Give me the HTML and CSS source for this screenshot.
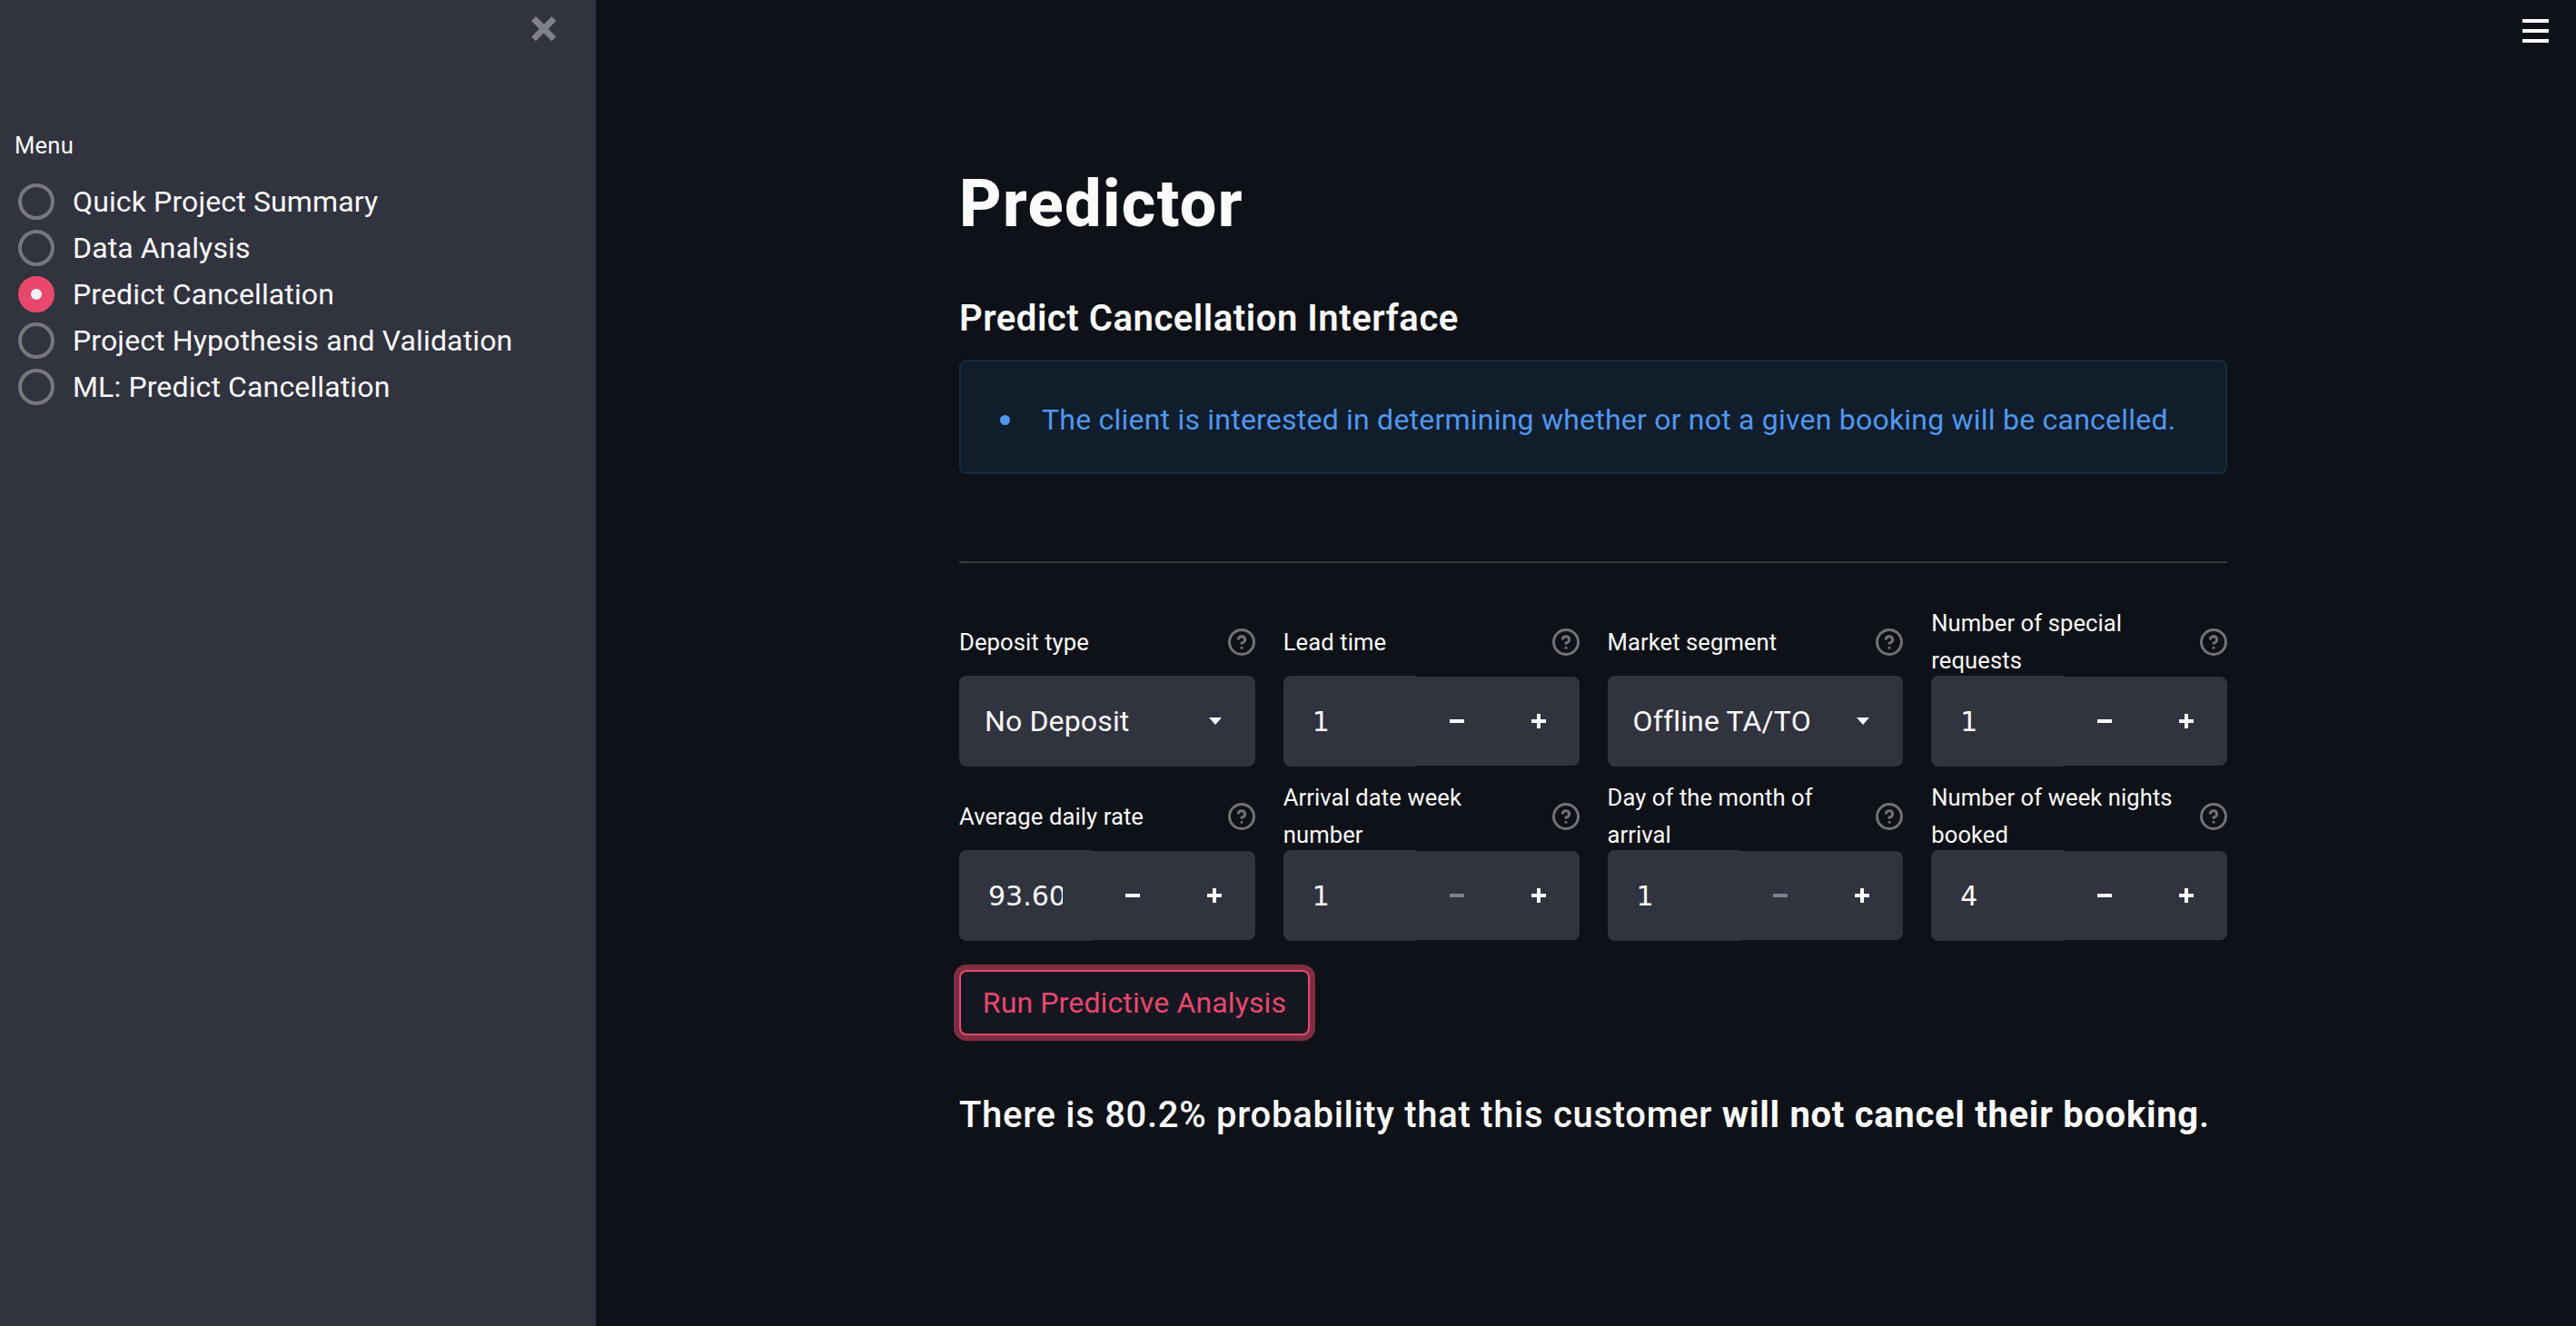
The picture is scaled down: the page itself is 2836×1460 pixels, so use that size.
FILE: index.html
```html
<!DOCTYPE html>
<html lang="en">
<head>
<meta charset="utf-8">
<title>Predictor</title>
<link rel="stylesheet" href="styles.css">
</head>
<body>
<aside class="sidebar">
  <svg class="close" viewBox="0 0 8 8"><path d="M1.41 0L0 1.41l.72.72L2.5 3.94.72 5.72 0 6.41 1.41 7.82l.72-.72 1.78-1.78 1.78 1.78.69.72 1.41-1.41-.72-.72-1.78-1.78 1.78-1.78.72-.69L6.41 0l-.69.72L3.94 2.5 2.16.72 1.41 0z"/></svg>
  <div class="menu-label">Menu</div>
  <ul class="radio-list">
    <li class="radio"><span class="dot"></span>Quick Project Summary</li>
    <li class="radio"><span class="dot"></span>Data Analysis</li>
    <li class="radio selected"><span class="dot"></span>Predict Cancellation</li>
    <li class="radio"><span class="dot"></span>Project Hypothesis and Validation</li>
    <li class="radio"><span class="dot"></span>ML: Predict Cancellation</li>
  </ul>
</aside>
<main class="main">
  <div class="hamburger"><span></span><span></span><span></span></div>
  <h1 class="title">Predictor</h1>
  <h3 class="subtitle">Predict Cancellation Interface</h3>
  <div class="info"><span class="bullet"></span><span class="info-text">The client is interested in determining whether or not a given booking will be cancelled.</span></div>
  <hr class="rule">
  <section class="form-grid">
    <div class="field">
      <div class="label"><span>Deposit type</span><svg class="help" viewBox="0 0 24 24"><circle cx="12" cy="12" r="10.8"/><path d="M9.09 9a3 3 0 0 1 5.83 1c0 2-3 3-3 3"/><path d="M12 17h.01"/></svg></div>
      <div class="select"><span>No Deposit</span><svg class="caret" viewBox="0 0 14 8"><path d="M0 0h14L7 8z"/></svg></div>
    </div>
    <div class="field">
      <div class="label"><span>Lead time</span><svg class="help" viewBox="0 0 24 24"><circle cx="12" cy="12" r="10.8"/><path d="M9.09 9a3 3 0 0 1 5.83 1c0 2-3 3-3 3"/><path d="M12 17h.01"/></svg></div>
      <div class="number"><div class="value"><span class="digits">1</span></div><div class="steps"><span class="step minus"></span><span class="step plus"></span></div></div>
    </div>
    <div class="field">
      <div class="label"><span>Market segment</span><svg class="help" viewBox="0 0 24 24"><circle cx="12" cy="12" r="10.8"/><path d="M9.09 9a3 3 0 0 1 5.83 1c0 2-3 3-3 3"/><path d="M12 17h.01"/></svg></div>
      <div class="select"><span>Offline TA/TO</span><svg class="caret" viewBox="0 0 14 8"><path d="M0 0h14L7 8z"/></svg></div>
    </div>
    <div class="field">
      <div class="label"><span>Number of special<br>requests</span><svg class="help" viewBox="0 0 24 24"><circle cx="12" cy="12" r="10.8"/><path d="M9.09 9a3 3 0 0 1 5.83 1c0 2-3 3-3 3"/><path d="M12 17h.01"/></svg></div>
      <div class="number"><div class="value"><span class="digits">1</span></div><div class="steps"><span class="step minus"></span><span class="step plus"></span></div></div>
    </div>
    <div class="field">
      <div class="label"><span>Average daily rate</span><svg class="help" viewBox="0 0 24 24"><circle cx="12" cy="12" r="10.8"/><path d="M9.09 9a3 3 0 0 1 5.83 1c0 2-3 3-3 3"/><path d="M12 17h.01"/></svg></div>
      <div class="number"><div class="value"><span class="digits">93.60</span></div><div class="steps"><span class="step minus"></span><span class="step plus"></span></div></div>
    </div>
    <div class="field">
      <div class="label"><span>Arrival date week<br>number</span><svg class="help" viewBox="0 0 24 24"><circle cx="12" cy="12" r="10.8"/><path d="M9.09 9a3 3 0 0 1 5.83 1c0 2-3 3-3 3"/><path d="M12 17h.01"/></svg></div>
      <div class="number"><div class="value"><span class="digits">1</span></div><div class="steps"><span class="step minus disabled"></span><span class="step plus"></span></div></div>
    </div>
    <div class="field">
      <div class="label"><span>Day of the month of<br>arrival</span><svg class="help" viewBox="0 0 24 24"><circle cx="12" cy="12" r="10.8"/><path d="M9.09 9a3 3 0 0 1 5.83 1c0 2-3 3-3 3"/><path d="M12 17h.01"/></svg></div>
      <div class="number"><div class="value"><span class="digits">1</span></div><div class="steps"><span class="step minus disabled"></span><span class="step plus"></span></div></div>
    </div>
    <div class="field">
      <div class="label"><span>Number of week nights<br>booked</span><svg class="help" viewBox="0 0 24 24"><circle cx="12" cy="12" r="10.8"/><path d="M9.09 9a3 3 0 0 1 5.83 1c0 2-3 3-3 3"/><path d="M12 17h.01"/></svg></div>
      <div class="number"><div class="value"><span class="digits">4</span></div><div class="steps"><span class="step minus"></span><span class="step plus"></span></div></div>
    </div>
  </section>
  <button class="run">Run Predictive Analysis</button>
  <p class="result">There is 80.2% probability that this customer <strong>will not cancel their booking</strong>.</p>
</main>
</body>
</html>
```
FILE: styles.css
```css
* { box-sizing: border-box; }
html, body { margin: 0; height: 100%; }
body {
  display: flex;
  height: 1460px;
  overflow: hidden;
  background: #0e1117;
  color: #fafafa;
  font-family: Roboto, "Noto Sans", sans-serif;
}
.sidebar {
  position: relative;
  width: 656px;
  flex: none;
  background: #31333f;
  padding: 138px 16px 0;
}
.close {
  position: absolute;
  left: 585px;
  top: 18px;
  width: 28px;
  height: 28px;
  fill: #808188;
}
.menu-label {
  font-size: 25.6px;
  line-height: 44px;
  letter-spacing: 0.2px;
}
.radio-list {
  list-style: none;
  margin: 14px 0 0;
  padding: 0;
}
.radio {
  display: flex;
  align-items: center;
  height: 51.2px;
  font-size: 32px;
  letter-spacing: 0.13px;
}
.dot {
  width: 40px;
  height: 40px;
  margin: 0 20px 0 4px;
  border: 4px solid #77787f;
  border-radius: 50%;
  flex: none;
}
.selected .dot {
  border: 14px solid #e8486b;
  background: #f0f0f5;
}
.main {
  position: relative;
  flex: 1;
  padding: 175px 384px 0 400px;
}
.hamburger {
  position: absolute;
  right: 30px;
  top: 21px;
  width: 29px;
  display: flex;
  flex-direction: column;
  gap: 7px;
}
.hamburger span {
  height: 4px;
  background: #fafafa;
}
.title {
  margin: 0 0 44px;
  font-size: 72px;
  line-height: 100px;
  font-weight: 800;
  letter-spacing: 1.4px;
}
.subtitle {
  margin: 0 0 13px;
  font-size: 40px;
  line-height: 64px;
  font-weight: 600;
  letter-spacing: 0.55px;
}
.info {
  display: flex;
  align-items: center;
  height: 126px;
  padding: 6px 32px 0 43px;
  background: #111d2b;
  border: 2px solid #162a3f;
  border-radius: 8px;
  color: #4f97f0;
  font-size: 32px;
  letter-spacing: 0.22px;
}
.bullet {
  width: 11px;
  height: 11px;
  border-radius: 50%;
  background: #4f97f0;
  margin-right: 35px;
  flex: none;
}
.rule {
  margin: 96px 0 0;
  height: 2px;
  border: 0;
  background: #3a3b42;
}
.form-grid {
  display: grid;
  grid-template-columns: repeat(4, 1fr);
  column-gap: 31px;
  row-gap: 14px;
  margin-top: 46px;
}
.label {
  display: flex;
  align-items: center;
  justify-content: space-between;
  height: 78px;
  padding-top: 4px;
  font-size: 25.6px;
  line-height: 41px;
  letter-spacing: 0.08px;
}
.help {
  width: 30px;
  height: 30px;
  flex: none;
  fill: none;
  stroke: #717276;
  stroke-width: 2.4;
  stroke-linecap: round;
  stroke-linejoin: round;
}
.select {
  display: flex;
  align-items: center;
  justify-content: space-between;
  height: 100px;
  padding: 0 37px 0 28px;
  background: #31333f;
  border-radius: 8px;
  font-size: 32px;
  letter-spacing: 0.15px;
}
.caret {
  width: 14px;
  height: 8px;
  fill: #fafafa;
}
.number {
  display: flex;
  align-items: center;
  height: 100px;
}
.value {
  width: 146px;
  height: 100px;
  flex: none;
  display: flex;
  align-items: center;
  padding-left: 32px;
  background: #31333f;
  border-radius: 8px 0 0 8px;
  font-family: "DejaVu Sans", sans-serif;
  font-size: 30px;
  white-space: nowrap;
}
.digits {
  display: block;
  width: 82px;
  overflow: hidden;
}
.steps {
  flex: 1;
  display: flex;
  height: 98px;
  background: #31333f;
  border-radius: 0 8px 8px 0;
}
.step {
  position: relative;
  flex: 1;
}
.step::before, .plus::after {
  content: "";
  position: absolute;
  left: 50%;
  top: 50%;
  width: 16px;
  height: 4px;
  margin: -2px 0 0 -8px;
  background: #fafafa;
}
.plus::after {
  width: 4px;
  height: 16px;
  margin: -8px 0 0 -2px;
}
.disabled::before { background: #7f808f; }
.run {
  display: block;
  width: 386px;
  height: 72px;
  margin: 32px 0 0;
  padding: 0;
  background: #141722;
  border: 2px solid #e8486b;
  border-radius: 8px;
  box-shadow: 0 0 0 6px #7d2e44;
  color: #e8486b;
  font: inherit;
  font-size: 32px;
  letter-spacing: 0.13px;
}
.result {
  margin: 56px 0 0;
  font-size: 40px;
  line-height: 64px;
  font-weight: 500;
  letter-spacing: 0.7px;
  white-space: nowrap;
}
.result strong { font-weight: 700; }
```
